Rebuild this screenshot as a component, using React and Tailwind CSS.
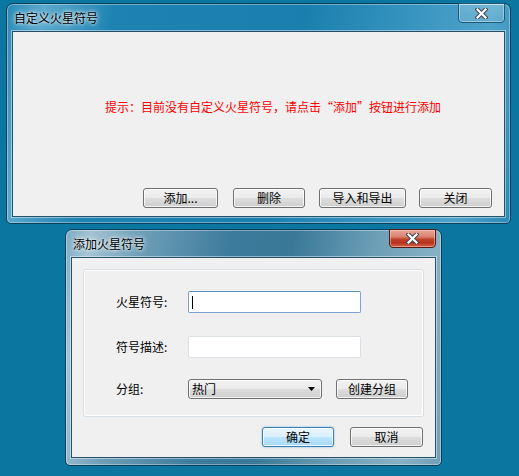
const font = "font-['Noto_Sans_CJK_SC','Noto_Sans',sans-serif]";

function CloseGlyph() {
  return (
    <svg width="13" height="11" viewBox="0 0 13 11">
      <path d="M2.5 1.5 L10.5 9.5 M10.5 1.5 L2.5 9.5" stroke="#3b4650" strokeWidth="4.2" strokeLinecap="square" />
      <path d="M2.5 1.5 L10.5 9.5 M10.5 1.5 L2.5 9.5" stroke="#ffffff" strokeWidth="2.2" strokeLinecap="square" />
    </svg>
  );
}

function CloseButton({ active }) {
  if (active) {
    return (
      <div className="w-[47px] h-[19px] -mt-px rounded-b-[4px] border border-[#5a1a10] shadow-[inset_0_0_0_1px_rgba(255,220,210,0.45)] bg-[linear-gradient(180deg,#e9a89a_0%,#d9816e_40%,#c0412a_55%,#b8321d_75%,#d26650_100%)] flex items-center justify-center">
        <CloseGlyph />
      </div>
    );
  }
  return (
    <div className="w-[47px] h-[20px] -mt-px rounded-b-[4px] border border-[#1f5a78] shadow-[inset_0_0_0_1px_rgba(255,255,255,0.35)] bg-[linear-gradient(180deg,rgba(255,255,255,0.22)_0%,rgba(255,255,255,0.12)_100%)] flex items-center justify-center">
      <CloseGlyph />
    </div>
  );
}

function Button({ text, className = "", primary }) {
  const skin = primary
    ? "border-[#3c7fb1] shadow-[inset_0_0_0_1px_rgba(255,255,255,0.8),0_0_2px_#62b4e6] bg-[linear-gradient(180deg,#eaf6fd_0%,#d9f0fc_50%,#bee6fd_51%,#a7d9f5_100%)]"
    : "border-[#707070] shadow-[inset_0_0_0_1px_rgba(255,255,255,0.75)] bg-[linear-gradient(180deg,#f2f2f2_0%,#ebebeb_50%,#dddddd_51%,#cfcfcf_100%)]";
  return (
    <div className={`h-[20px] rounded-[3px] border ${skin} flex items-center justify-center text-[12px] leading-none text-black ${className}`}>
      {text}
    </div>
  );
}

function Window({ title, active, className, children }) {
  const glass = active
    ? "bg-[linear-gradient(100deg,#7eabc2_0%,#a3c3d3_6%,#6f9fb8_18%,#3d7b9c_40%,#3a7898_55%,#6d9fb7_75%,#86b1c5_90%,#6f9fb8_100%)]"
    : "bg-[linear-gradient(100deg,#2a8ab8_0%,#5aa8cc_7%,#1e83b2_20%,#1a7fae_55%,#3c97c2_78%,#4ea2c9_90%,#2a8ab8_100%)]";
  return (
    <div className={`${className} ${glass} flex flex-col rounded-t-[7px] rounded-b-[5px] border border-[#0c3f5c] shadow-[inset_0_0_0_1px_rgba(255,255,255,0.35)] px-[5px] ${font}`}>
      <div className="h-[27px] flex items-start justify-between shrink-0">
        <span className="pl-[2px] pt-[6px] text-[12px] leading-[16px] text-black [text-shadow:0_0_6px_#ffffff,0_0_3px_#ffffff]">{title}</span>
        <CloseButton active={active} />
      </div>
      {children}
    </div>
  );
}

export default function App() {
  return (
    <div className="w-[519px] h-[476px] bg-[#0b77a1] overflow-hidden flex flex-col">
      <Window title="自定义火星符号" className="ml-[6px] mt-[3px] w-[505px] h-[221px] pb-[6px]">
        <div className="flex-1 flex flex-col bg-[#f0f0f0] border border-[#24506a] shadow-[0_0_0_1px_rgba(255,255,255,0.45)]">
          <p className="pl-[92px] pt-[67px] text-[12px] leading-[16px] text-[#ff0000]">
            提示：目前没有自定义火星符号，请点击“添加”按钮进行添加
          </p>
          <div className="mt-auto flex justify-end pr-[12px] pb-[8px]">
            <Button text="添加..." className="w-[75px]" />
            <Button text="删除" className="w-[72px] ml-[15px]" />
            <Button text="导入和导出" className="w-[87px] ml-[14px]" />
            <Button text="关闭" className="w-[73px] ml-[13px]" />
          </div>
        </div>
      </Window>

      <Window title="添加火星符号" active className="ml-[65px] mt-[5px] w-[377px] h-[237px] pb-[7px]">
        <div className="flex-1 flex flex-col bg-[#f0f0f0] border border-[#24506a] shadow-[0_0_0_1px_rgba(255,255,255,0.45)] px-[11px] pt-[11px]">
          <div className="h-[148px] rounded-[3px] border border-[#d5dfe5] shadow-[inset_0_0_0_1px_#ffffff] pl-[32px] pt-[21px] text-[12px] text-black">
            <div className="flex items-center h-[22px]">
              <span className="w-[72px]">火星符号:</span>
              <div className="w-[173px] h-[22px] bg-white border border-[#7da2ce] border-t-[#5c93bc] rounded-[2px] flex items-center pl-[3px]">
                <span className="w-px h-[13px] bg-black" />
              </div>
            </div>
            <div className="flex items-center h-[22px] mt-[23px]">
              <span className="w-[72px]">符号描述:</span>
              <div className="w-[173px] h-[22px] bg-white border border-[#dbdfe6] rounded-[2px]" />
            </div>
            <div className="flex items-center h-[20px] mt-[21px]">
              <span className="w-[72px]">分组:</span>
              <div className="w-[134px] h-[20px] rounded-[3px] border border-[#707070] shadow-[inset_0_0_0_1px_rgba(255,255,255,0.75)] bg-[linear-gradient(180deg,#f2f2f2_0%,#ebebeb_50%,#dddddd_51%,#cfcfcf_100%)] flex items-center justify-between pl-[3px] pr-[6px]">
                <span className="leading-none">热门</span>
                <svg width="7" height="4" viewBox="0 0 7 4"><path d="M0 0 H7 L3.5 4 Z" fill="#000" /></svg>
              </div>
              <Button text="创建分组" className="w-[72px] ml-[14px]" />
            </div>
          </div>
          <div className="flex justify-end mt-[10px] pr-[1px]">
            <Button text="确定" primary className="w-[72px]" />
            <Button text="取消" className="w-[73px] ml-[16px]" />
          </div>
        </div>
      </Window>
    </div>
  );
}
